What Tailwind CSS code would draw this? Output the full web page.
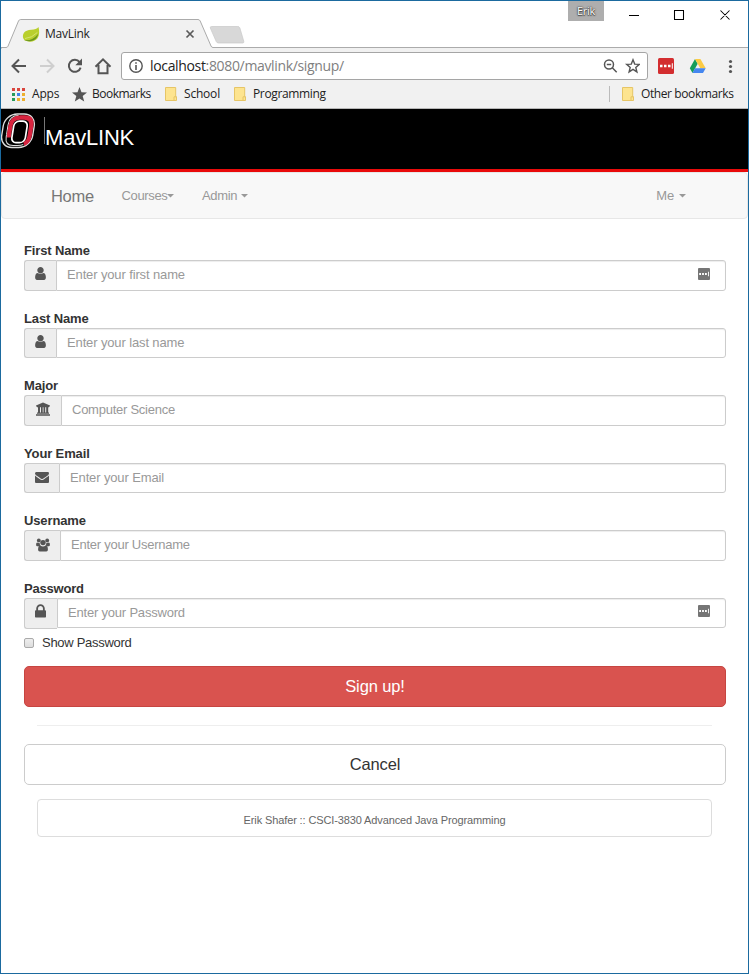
<!DOCTYPE html>
<html lang="en">
<head>
<meta charset="utf-8">
<title>MavLink</title>
<script src="https://cdn.jsdelivr.net/npm/@tailwindcss/browser@4"></script>
</head>
<body class="bg-white">
<svg class="hidden">
  <symbol id="user" viewBox="0 0 1280 1792"><path d="M1280 1399q0 109-62.500 187t-150.500 78h-854q-88 0-150.500-78t-62.500-187q0-85 8.500-160.500t31.500-152 58.500-131 94-89 134.500-34.500q131 128 313 128t313-128q76 0 134.500 34.500t94 89 58.500 131 31.500 152 8.500 160.500zm-256-887q0 159-112.500 271.500t-271.500 112.500-271.500-112.500-112.500-271.500 112.500-271.500 271.500-112.500 271.500 112.500 112.500 271.500z"/></symbol>
  <symbol id="folder" viewBox="0 0 12 14"><path d="M.5.5h10.200v9.200h.8v3.800H.5z" fill="#fde48f" stroke="#e6c566"/><path d="M9 13.500V9.800h2.200" fill="none" stroke="#e6c566"/></symbol>
  <symbol id="dots" viewBox="0 0 12 12"><rect width="12" height="12" rx="1" fill="#757575"/><path d="M1.200 5h1.800v2H1.200zM4.100 5h1.800v2H4.100zM7 5h1.800v2H7zM10 3.800h.9v4.400H10z" fill="#fff"/></symbol>
</svg>
<div class="flex h-[974px] w-[749px] flex-col overflow-hidden border border-[#1b6a9f] bg-white font-['Liberation_Sans',Arial,sans-serif] text-[13px] text-[#333]">

  <!-- Tab strip -->
  <div class="relative flex h-[47px] shrink-0 font-['Open_Sans','Noto_Sans',sans-serif] text-[12px] tracking-[-0.35px] text-[#222]">
    <svg class="absolute left-0 top-0" width="747" height="48" viewBox="1 1 747 48">
      <path d="M1 47.500H6q1.500 0 2-1.300L18.500 21q.7-1.500 2.200-1.500H198q1.500 0 2.200 1.500L211 46q.6 1.500 2 1.500H749V50H1z" fill="#f1f1f1" stroke="#ababab"/>
      <path d="M211.500 26.500h26.300q1.400 0 2 1.300l4 13.600q.4 1.600-1.300 1.600h-24q-1.500 0-2.200-1.300L210.300 28q-.4-1.500 1.200-1.500z" fill="#d8d8d8" stroke="#c9c9c9" stroke-width=".7"/>
      <path d="M38.500 27q1.800 6.800-1 11.300-4.500 5.200-12.700 2.300-3.300-3.600-1-7.700 2.300-3 7.500-3.200 5-.1 7.200-2.700z" fill="#b9cf2c"/>
      <path d="M24.300 40.200q8.500.8 13.900-6.500-.8 5.200-5.200 6.900-4.300 1.500-8.700-.4z" fill="#6c961f"/>
      <path d="M25 38.500q7-.5 12.300-6" fill="none" stroke="#e3ec8e" stroke-width=".7"/>
      <path d="M186.500 30.500l7 7m0-7l-7 7" stroke="#5a5a5a" stroke-width="1.700"/>
      <path d="M629 15.500h10M674.500 10.500h9v9h-9zM720.500 10.500l9 9m0-9l-9 9" fill="none" stroke="#000" stroke-width="1.050"/>
    </svg>
    <span class="relative ml-[44px] mt-[24px] leading-[18px] tracking-[-0.25px]">MavLink</span>
    <span class="relative ml-auto mr-[144px] h-5 w-9 bg-[#aeaeae] text-center text-[11px] leading-5 text-white [text-shadow:0_0_2px_#333,0_0_1px_#333,0_1px_1px_#555]">Erik</span>
  </div>

  <!-- Address toolbar -->
  <div class="flex h-[36px] shrink-0 items-center bg-[#f1f1f1] pb-px">
    <svg width="120" height="28" viewBox="1 52 120 28" fill="none" stroke="#555" stroke-width="2">
      <path d="M26 66H13M19 59.500L12.500 66l6.500 6.500"/>
      <path d="M40 66h13M47 59.500l6.500 6.500-6.500 6.500" stroke="#cfcfcf"/>
      <path d="M79.600 62.100a6 6 0 1 0 1 5.500"/><path d="M82 58.500v6.700h-6.700z" fill="#555" stroke="none"/>
      <path d="M95.500 66.800L103 59.300l7.500 7.500M98.500 65v8.200h9V65"/>
    </svg>
    <div class="flex h-[28px] w-[527px] items-center rounded-[3px] border border-[#a5a5a5] bg-white pl-[7px] pr-[7px] font-['Open_Sans','Noto_Sans',sans-serif] text-[14px] tracking-[-0.34px] text-[#808080]">
      <svg class="mr-[7px] shrink-0" width="14" height="14" viewBox="0 0 14 14"><circle cx="7" cy="7" r="6.200" fill="none" stroke="#555" stroke-width="1.400"/><path d="M6.200 3.200h1.600v1.600H6.200zM6.200 6h1.600v5H6.200z" fill="#555"/></svg>
      <span class="leading-5"><span class="text-[#222]">localhost</span>:8080/mavlink/signup/</span>
      <svg class="ml-auto shrink-0" width="37" height="16" viewBox="0 0 37 16" fill="none" stroke="#555" stroke-width="1.500"><circle cx="6" cy="6.500" r="4.500"/><path d="M3.800 6.500h4.400M9.300 9.800l4.400 4.400"/><path d="M30 1.800l1.700 4.300 4.600.3-3.500 3 1.100 4.500-3.900-2.500-3.900 2.500 1.100-4.500-3.500-3 4.600-.3z" stroke-width="1.400"/></svg>
    </div>
    <svg width="100" height="28" viewBox="648 52 100 28">
      <rect x="658" y="58" width="16" height="16" rx="1.500" fill="#d32d2f"/><path d="M660 64.800h2.500v2.500H660zM664 64.800h2.500v2.500H664zM668 64.800h2.500v2.500H668zM671.800 63.300h1v5.500h-1z" fill="#fff"/>
      <path d="M695 59l2.700 4.800-5.200 9.200-2.700-4.800z" fill="#159d59"/><path d="M695 59h5.400l5.300 9.300h-5.400z" fill="#fccb44"/><path d="M695 68.300h10.700L703 73h-10.500z" fill="#4587f0"/>
      <g fill="#555"><circle cx="730.500" cy="61.500" r="1.600"/><circle cx="730.500" cy="66.500" r="1.600"/><circle cx="730.500" cy="71.500" r="1.600"/></g>
    </svg>
  </div>

  <!-- Bookmarks bar -->
  <div class="flex h-[25px] shrink-0 items-center border-b border-[#b6b6b6] bg-[#f1f1f1] pb-[4px] pl-[11px] font-['Open_Sans','Noto_Sans',sans-serif] text-[12px] leading-[18px] tracking-[-0.4px] text-[#222]">
    <svg width="13" height="13" viewBox="0 0 13 13"><path d="M0 0h3v3H0zM5 0h3v3H5zM10 0h3v3h-3z" fill="#d9453d"/><path d="M0 5h3v3H0z" fill="#289b5b"/><path d="M5 5h3v3H5z" fill="#3f82e8"/><path d="M10 5h3v3h-3zM5 10h3v3H5zM10 10h3v3h-3z" fill="#edb02e"/><path d="M0 10h3v3H0z" fill="#289b5b"/></svg>
    <span class="ml-[7px] w-[40px] tracking-[-0.2px]">Apps</span>
    <svg width="15" height="15" viewBox="0 0 15 15"><path d="M7.500 0l2 5.200 5.500.3-4.300 3.500 1.500 5.500-4.700-3.100-4.700 3.100L4.300 9 0 5.500l5.500-.3z" fill="#555"/></svg>
    <span class="ml-[5px] w-[73px] tracking-[-0.5px]">Bookmarks</span>
    <svg width="12" height="14"><use href="#folder"/></svg>
    <span class="ml-[7px] w-[50px] tracking-[-0.2px]">School</span>
    <svg width="12" height="14"><use href="#folder"/></svg>
    <span class="ml-[7px] tracking-[-0.35px]">Programming</span>
    <span class="ml-auto h-4 w-px bg-[#bbb]"></span>
    <svg class="ml-[12px]" width="12" height="14"><use href="#folder"/></svg>
    <span class="ml-[7px] w-[107px]">Other bookmarks</span>
  </div>

  <!-- Site banner -->
  <header class="flex h-[63px] shrink-0 border-b-[3px] border-[#e90a0a] bg-black text-white">
    <svg width="43" height="45" viewBox="1 109 43 45" fill="none">
      <g transform="translate(18 130.500) skewX(-9)">
        <rect x="-15.500" y="-16.500" width="31" height="33.500" rx="12" fill="#000" stroke="#ddd" stroke-width="1.400"/>
        <path d="M-10.800 4V-6q0-9 9-9" stroke="#eee" stroke-width="1"/>
        <path d="M-8.300 7V-4.500q0-8.500 8.500-8.500H4.500q8 0 8 8.500V5q0 6.500-4.500 8.500" stroke="#d92540" stroke-width="4.300"/>
        <path d="M-10.800 4V6.500Q-10.800 15-2.500 15H1.500q4.500 0 6-1" stroke="#ddd" stroke-width="1"/>
        <rect x="-5" y="-9.300" width="13.500" height="21.500" rx="5" fill="#000" stroke="#fff" stroke-width="1.700"/>
      </g>
    </svg>
    <span class="mt-[8px] h-[27px] w-px bg-[#777]"></span>
    <h1 class="mt-[14px] text-[22px] leading-[30px] tracking-[-0.2px]">MavLINK</h1>
  </header>

  <!-- Navigation -->
  <nav class="flex h-[47px] shrink-0 items-center rounded-[4px] border border-[#e7e7e7] bg-[#f8f8f8] pl-[49px] text-[#999]">
    <a class="mt-[2px] w-[70.500px] text-[16.500px] tracking-[-0.3px] text-[#777]">Home</a>
    <a class="flex w-[80.500px] items-center tracking-[-0.35px]">Courses<svg width="7" height="4" viewBox="0 0 7 4" class="mt-px"><path d="M0 0h7L3.500 3.500z" fill="#999"/></svg></a>
    <a class="flex items-center gap-1 tracking-[-0.35px]">Admin<svg width="7" height="4" viewBox="0 0 7 4" class="mt-px"><path d="M0 0h7L3.500 3.500z" fill="#999"/></svg></a>
    <a class="ml-auto mr-[61px] flex items-center gap-[5px] tracking-[-0.2px]">Me<svg width="7" height="4" viewBox="0 0 7 4" class="mt-px"><path d="M0 0h7L3.500 3.500z" fill="#999"/></svg></a>
  </nav>

  <!-- Sign-up form -->
  <form class="flex flex-col pl-[23px] pr-[22px] pt-[22.400px] tracking-[-0.13px]">
    <div class="h-[67.600px]">
      <label class="block h-[18.600px] leading-[19px] font-bold">First Name</label>
      <div class="flex h-[30.600px] items-stretch">
        <span class="flex w-[32px] items-center justify-center rounded-l-[3px] border border-r-0 border-[#ccc] bg-[#eee]"><svg width="11" height="15" fill="#555" class="mr-px mb-[3px]"><use href="#user"/></svg></span>
        <div class="flex flex-1 items-center justify-between rounded-r-[3px] border border-[#ccc] pb-px pl-[10px] pr-[15px] text-[#999] shadow-[inset_0_1px_1px_rgba(0,0,0,0.075)]">Enter your first name<svg class="mb-[2px]" width="12" height="12"><use href="#dots"/></svg></div>
      </div>
    </div>
    <div class="h-[67.600px]">
      <label class="block h-[18.600px] leading-[19px] font-bold">Last Name</label>
      <div class="flex h-[30.600px] items-stretch">
        <span class="flex w-[32px] items-center justify-center rounded-l-[3px] border border-r-0 border-[#ccc] bg-[#eee]"><svg width="11" height="15" fill="#555" class="mr-px mb-[3px]"><use href="#user"/></svg></span>
        <div class="flex h-[30px] flex-1 items-center rounded-r-[3px] border border-[#ccc] pl-[10px] text-[#999] shadow-[inset_0_1px_1px_rgba(0,0,0,0.075)]">Enter your last name</div>
      </div>
    </div>
    <div class="h-[67.600px]">
      <label class="block h-[18.600px] leading-[18px] font-bold">Major</label>
      <div class="flex h-[30.600px] items-stretch">
        <span class="flex w-[37px] items-center justify-center rounded-l-[3px] border border-r-0 border-[#ccc] bg-[#eee]"><svg width="14" height="14" viewBox="0 0 14 14" fill="#555" class="mr-px mb-[2px]"><path d="M7 .5L14 3.500v1h-1v.7H1v-.7H0v-1zM2 5.200h2v5.500H2zM5 5.200h1.700v5.500H5zM7.500 5.200h1.700v5.500H7.500zM10.200 5.200h2v5.500h-2zM1 10.500h12v1.300H1zM0 12.300h14v1.400H0z"/></svg></span>
        <div class="flex flex-1 items-center rounded-r-[3px] border border-[#ccc] pb-px pl-[10px] tracking-[-0.25px] text-[#999] shadow-[inset_0_1px_1px_rgba(0,0,0,0.075)]">Computer Science</div>
      </div>
    </div>
    <div class="h-[67.600px]">
      <label class="block h-[18.600px] leading-[19px] font-bold">Your Email</label>
      <div class="flex h-[30.600px] items-stretch">
        <span class="flex w-[35px] items-center justify-center rounded-l-[3px] border border-r-0 border-[#ccc] bg-[#eee]"><svg width="14" height="14" viewBox="0 0 1792 1792" fill="#555" class="mb-[3px]"><path d="M1792 710v794q0 66-47 113t-113 47h-1472q-66 0-113-47t-47-113v-794q44 49 101 87 362 246 497 345 57 42 92.500 65.500t94.500 48 110 24.500h2q51 0 110-24.500t94.500-48 92.500-65.500q170-123 498-345 57-39 100-87zm0-294q0 79-49 151t-122 123q-376 261-468 325-10 7-42.500 31t-54 38.500-52 32.500-57.500 27-50 9h-2q-23 0-50-9t-57.500-27-52-32.500-54-38.500-42.500-31q-91-64-262-182.500t-205-142.500q-62-42-117-115.500t-55-136.500q0-78 41.500-130t118.500-52h1472q65 0 112.500 47t47.500 113z"/></svg></span>
        <div class="flex h-[30px] flex-1 items-center rounded-r-[3px] border border-[#ccc] pl-[10px] text-[#999] shadow-[inset_0_1px_1px_rgba(0,0,0,0.075)]">Enter your Email</div>
      </div>
    </div>
    <div class="h-[67.600px]">
      <label class="block h-[18.600px] leading-[18px] font-bold">Username</label>
      <div class="flex h-[30.600px] items-stretch">
        <span class="flex w-[36px] items-center justify-center rounded-l-[3px] border border-r-0 border-[#ccc] bg-[#eee]"><svg width="14" height="14" viewBox="0 0 14 14" fill="#555" class="mb-[2px]"><circle cx="2.800" cy="2.500" r="1.900"/><circle cx="11.200" cy="2.500" r="1.900"/><circle cx="7" cy="4.600" r="2.700"/><path d="M.2 7.500q-.4-3 1-3.100 1.500 1 2.500.6Q3.600 6.500 4.500 7.300L3 8.200H1.200Q.3 8.200.2 7.500zM13.800 7.500q.4-3-1-3.100-1.500 1-2.500.6.1 1.500-.8 2.300l1.500.9h1.800q.9 0 1-.7zM4.400 7.600Q7 9.400 9.600 7.600q2.400.2 2.300 4.200 0 1.700-1.600 1.700H3.700q-1.600 0-1.600-1.700Q2 7.800 4.400 7.600z"/></svg></span>
        <div class="flex flex-1 items-center rounded-r-[3px] border border-[#ccc] pb-px pl-[10px] tracking-[-0.25px] text-[#999] shadow-[inset_0_1px_1px_rgba(0,0,0,0.075)]">Enter your Username</div>
      </div>
    </div>
    <div class="h-[49.600px] tracking-[-0.2px]">
      <label class="block h-[18.600px] leading-[19px] font-bold">Password</label>
      <div class="flex h-[30.600px] items-stretch">
        <span class="flex w-[33px] items-center justify-center rounded-l-[3px] border border-r-0 border-[#ccc] bg-[#eee]"><svg width="11" height="15" viewBox="320 128 1152 1536" fill="#555" class="mr-px mb-[3px]"><path d="M640 768h512v-192q0-106-75-181t-181-75-181 75-75 181v192zm832 96v576q0 40-28 68t-68 28h-960q-40 0-68-28t-28-68v-576q0-40 28-68t68-28h32v-192q0-184 132-316t316-132 316 132 132 316v192h32q40 0 68 28t28 68z"/></svg></span>
        <div class="flex h-[30px] flex-1 items-center justify-between rounded-r-[3px] border border-[#ccc] pl-[10px] pr-[15px] text-[#999] shadow-[inset_0_1px_1px_rgba(0,0,0,0.075)]">Enter your Password<svg class="mb-[3px]" width="12" height="12"><use href="#dots"/></svg></div>
      </div>
    </div>
    <label class="mt-[4px] flex h-5 items-center gap-2 tracking-[-0.28px]"><span class="size-[10px] rounded-[2px] border border-[#aaa] bg-linear-to-b from-[#eee] to-[#ddd]"></span>Show Password</label>
    <button type="button" class="mt-[13px] h-[41px] rounded-[5px] border border-[#c64541] bg-[#d9534f] text-[16.500px] text-white">Sign up!</button>
    <hr class="ml-[13px] mr-[14px] mt-[18px] border-[#eee]">
    <button type="button" class="mt-[18px] h-[41px] rounded-[5px] border border-[#ccc] bg-white text-[16.500px]">Cancel</button>
  </form>
  <footer class="mx-[36px] mt-[14px] flex h-[38px] shrink-0 items-center justify-center rounded-[4px] border border-[#ddd] pt-[4px] text-[11px] tracking-[-0.12px] text-[#666]">Erik Shafer :: CSCI-3830 Advanced Java Programming</footer>
</div>
</body>
</html>
